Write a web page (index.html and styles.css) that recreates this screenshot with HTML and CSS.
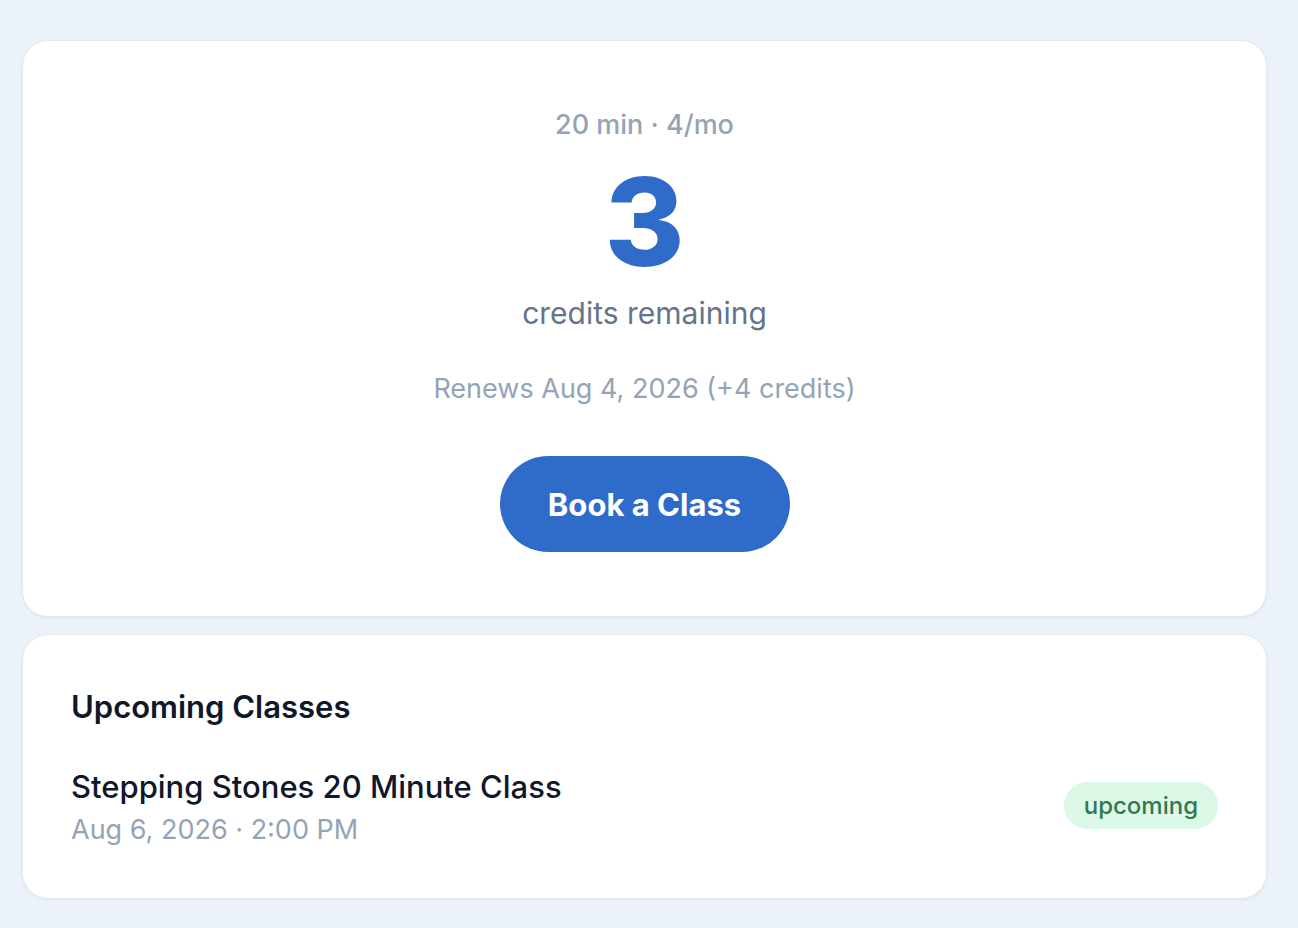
FILE: index.html
```html
<!DOCTYPE html>
<html lang="en">
<head>
  <meta charset="UTF-8" />
  <meta name="viewport" content="width=device-width, initial-scale=1.0"/>
  <title>Credits</title>
  <link rel="stylesheet" href="styles.css">
</head>
<body>
  <div class="page">
    <div class="card credits-card">
      <p class="plan">20 min · 4/mo</p>
      <div class="credits-count">3</div>
      <p class="credits-label">credits remaining</p>
      <p class="renews">Renews Aug 4, 2026 (+4 credits)</p>
      <button class="book-btn">Book a Class</button>
    </div>

    <div class="card classes-card">
      <h3>Upcoming Classes</h3>
      <div class="class-row">
        <div class="class-info">
          <div class="class-name">Stepping Stones 20 Minute Class</div>
          <div class="class-time">Aug 6, 2026 · 2:00 PM</div>
        </div>
        <span class="badge">upcoming</span>
      </div>
    </div>
  </div>
</body>
</html>
```

FILE: styles.css
```css
* {
  box-sizing: border-box;
  margin: 0;
  padding: 0;
  font-family: Inter, "Noto Sans", sans-serif;
}

body, html {
  width: 100%;
  height: 100%;
  background: #ecf2fa;
}

.page {
  display: flex;
  flex-direction: column;
  gap: 17px;
  padding: 40px 31px 0 22px;
}

.card {
  background: #fff;
  border: 1px solid #e6e9ee;
  border-radius: 26px;
  box-shadow: 0 1px 3px rgba(15, 23, 42, 0.06);
}

.credits-card {
  display: flex;
  flex-direction: column;
  align-items: center;
  padding: 64px 40px 64px;
  text-align: center;
}

.plan {
  font-size: 27px;
  font-weight: 500;
  color: #94a3b8;
  line-height: 40px;
}

.credits-count {
  font-size: 122px;
  font-weight: 800;
  color: #2f6bc8;
  line-height: 120px;
  margin-top: 17px;
}

.credits-label {
  font-size: 30px;
  color: #64748b;
  line-height: 40px;
  margin-top: 11px;
}

.renews {
  font-size: 27px;
  color: #94a3b8;
  line-height: 40px;
  margin-top: 36px;
}

.book-btn {
  margin-top: 47px;
  width: 290px;
  height: 96px;
  border: none;
  border-radius: 48px;
  background: #2f6bc8;
  color: #fff;
  font-size: 31px;
  font-weight: 700;
  cursor: pointer;
}

.classes-card {
  padding: 50px 48px 46px;
}

.classes-card h3 {
  font-size: 31px;
  font-weight: 600;
  color: #0f172a;
  line-height: 44px;
}

.class-row {
  display: flex;
  align-items: center;
  justify-content: space-between;
  margin-top: 37px;
}

.class-name {
  font-size: 31px;
  font-weight: 500;
  color: #0f172a;
  line-height: 42px;
}

.class-time {
  font-size: 27px;
  color: #94a3b8;
  line-height: 44px;
}

.badge {
  display: inline-block;
  padding: 0 20px;
  height: 47px;
  line-height: 47px;
  margin-bottom: 8px;
  border-radius: 24px;
  background: #dcf8e6;
  color: #2f7a52;
  font-size: 24px;
  font-weight: 500;
}
```
